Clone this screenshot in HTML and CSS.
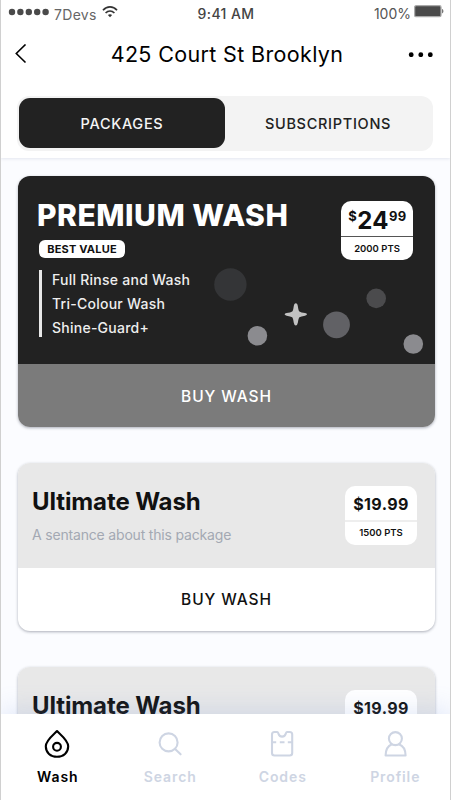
FILE: index.html
```html
<!DOCTYPE html>
<html lang="en">
<head>
  <meta charset="UTF-8">
  <meta name="viewport" content="width=device-width, initial-scale=1.0">
  <title>425 Court St Brooklyn</title>
  <link rel="stylesheet" href="styles.css">
</head>
<body>
  <div class="phone">
    <header class="header">
      <div class="status-bar">
        <div class="carrier">
          <svg width="42" height="8" viewBox="0 0 42 8" fill="#4a4a4a">
            <circle cx="4" cy="4" r="3.2"/><circle cx="12.4" cy="4" r="3.2"/><circle cx="20.8" cy="4" r="3.2"/><circle cx="29.2" cy="4" r="3.2"/><circle cx="37.6" cy="4" r="3.2"/>
          </svg>
          <span class="carrier-name">7Devs</span>
          <svg class="wifi" width="16" height="12" viewBox="0 0 16 12" fill="none" stroke="#333" stroke-width="1.7">
            <path d="M1 4.3C5-.2 11-.2 15 4.3"/>
            <path d="M3.6 7C6.2 4.3 9.8 4.3 12.4 7"/>
            <path d="M8 11.2L5.9 9C7.2 7.9 8.8 7.9 10.1 9Z" fill="#333" stroke="none"/>
          </svg>
        </div>
        <div class="clock">9:41 AM</div>
        <div class="battery">
          <span>100%</span>
          <svg width="30" height="13" viewBox="0 0 30 13">
            <rect x=".6" y=".7" width="26.4" height="11" rx="1.5" fill="#4a4a4a" stroke="#aaa" stroke-width="1.3"/>
            <path d="M28 4C29.9 4.4 29.9 8 28 8.4Z" fill="#777"/>
          </svg>
        </div>
      </div>
      <div class="title-bar">
        <button class="icon-button" aria-label="Back">
          <svg width="12" height="20" viewBox="0 0 12 20" fill="none" stroke="#000" stroke-width="1.6"><path d="M10.5 .5L1.3 9.5L10.5 18.5"/></svg>
        </button>
        <h1>425 Court St Brooklyn</h1>
        <button class="icon-button more" aria-label="More">
          <svg width="26" height="6" viewBox="0 0 26 6"><circle cx="3.2" cy="3.7" r="2.4"/><circle cx="12.8" cy="3.7" r="2.4"/><circle cx="22.3" cy="3.7" r="2.4"/></svg>
        </button>
      </div>
      <div class="tabs">
        <button class="tab active">PACKAGES</button>
        <button class="tab">SUBSCRIPTIONS</button>
      </div>
    </header>

    <main class="content">
      <section class="card premium">
        <div class="card-top">
          <svg class="bubbles" width="417" height="188" viewBox="0 0 417 188">
            <circle cx="212.4" cy="108.5" r="16.2" fill="#343537"/>
            <circle cx="239.4" cy="159.7" r="9.8" fill="#8b8b8f"/>
            <circle cx="318.5" cy="148.8" r="13.4" fill="#616165"/>
            <circle cx="358.2" cy="122.4" r="9.8" fill="#4b4b4d"/>
            <circle cx="395.3" cy="168" r="9.8" fill="#8b8b8f"/>
            <path d="M277.8 127.2Q279.4 127.2 279.9 130.5Q280.5 135 281.4 135.4Q283 136.4 287 136.9Q289 137.3 289 138.3Q289 139.3 287 139.7Q283 140.2 281.4 141.2Q280.5 142 279.9 146.5Q279.4 149.4 277.8 149.4Q276.2 149.4 275.7 146.5Q275.1 142 274.2 141.2Q272.6 140.2 268.6 139.7Q266.6 139.3 266.6 138.3Q266.6 137.3 268.6 136.9Q272.6 136.4 274.2 135.4Q275.1 135 275.7 130.5Q276.2 127.2 277.8 127.2Z" fill="#c2c2c2"/>
          </svg>
          <div class="info">
            <h2>PREMIUM WASH</h2>
            <span class="badge">BEST VALUE</span>
            <ul>
              <li>Full Rinse and Wash</li>
              <li>Tri-Colour Wash</li>
              <li>Shine-Guard+</li>
            </ul>
          </div>
          <div class="price">
            <div class="amount"><sup>$</sup>24<sup>99</sup></div>
            <div class="points">2000 PTS</div>
          </div>
        </div>
        <button class="buy">BUY WASH</button>
      </section>

      <section class="card">
        <div class="card-top">
          <div class="info">
            <h2>Ultimate Wash</h2>
            <p>A sentance about this package</p>
          </div>
          <div class="price">
            <div class="amount">$19.99</div>
            <div class="points">1500 PTS</div>
          </div>
        </div>
        <button class="buy">BUY WASH</button>
      </section>

      <section class="card">
        <div class="card-top">
          <div class="info">
            <h2>Ultimate Wash</h2>
          </div>
          <div class="price">
            <div class="amount">$19.99</div>
          </div>
        </div>
      </section>
    </main>

    <nav class="bottom-nav">
      <a class="nav-item active">
        <svg width="28" height="30" viewBox="0 0 28 30" fill="none" stroke="currentColor" stroke-width="2.1" stroke-linejoin="round">
          <path d="M14 2C11.5 5 2.8 11 2.8 17.3C2.8 23.6 7.6 27.8 14 27.8S25.2 23.6 25.2 17.3C25.2 11 16.5 5 14 2Z"/>
          <circle cx="14" cy="17.8" r="3.9"/>
        </svg>
        <span>Wash</span>
      </a>
      <a class="nav-item">
        <svg width="28" height="30" viewBox="0 0 28 30" fill="none" stroke="currentColor" stroke-width="2.1" stroke-linecap="round">
          <circle cx="12.6" cy="13.4" r="9"/><path d="M19.1 19.9L24.6 25.3"/>
        </svg>
        <span>Search</span>
      </a>
      <a class="nav-item">
        <svg width="28" height="30" viewBox="0 0 28 30" fill="none" stroke="currentColor" stroke-width="2.1" stroke-linejoin="round">
          <path d="M6.5 3H9.2C10.2 3 10 4 10.5 4.8C11.8 8.6 16.4 8.6 17.7 4.8C18.2 4 18 3 19 3H21.7Q24.2 3 24.2 5.5V24Q24.2 26.5 21.7 26.5H6.5Q4 26.5 4 24V5.5Q4 3 6.5 3Z"/>
          <path d="M4 13.3H8.2M11.8 13.3H16.5M19.8 13.3H24.2"/>
        </svg>
        <span>Codes</span>
      </a>
      <a class="nav-item">
        <svg width="28" height="30" viewBox="0 0 28 30" fill="none" stroke="currentColor" stroke-width="2.1" stroke-linejoin="round">
          <circle cx="14.4" cy="9.6" r="6.5"/>
          <path d="M10.9 15.2C6.7 16.8 4.7 20.6 4.6 26.5H24.6C24.5 20.6 22.5 16.8 17.9 15.2"/>
        </svg>
        <span>Profile</span>
      </a>
    </nav>
  </div>
</body>
</html>
```

FILE: styles.css
```css
* {
  box-sizing: border-box;
}

body {
  margin: 0;
  font-family: Inter, "Liberation Sans", sans-serif;
  color: #111;
}

h1, h2, p, ul {
  margin: 0;
  padding: 0;
}

button {
  font-family: inherit;
  border: none;
  background: none;
  padding: 0;
  cursor: pointer;
}

svg {
  display: block;
}

.phone {
  width: 451px;
  height: 800px;
  display: flex;
  flex-direction: column;
  overflow: hidden;
  background: #fbfcff;
  border-left: 1px solid #d0d0d0;
  border-right: 1px solid #d0d0d0;
}

.header {
  flex: none;
  height: 158px;
  background: #fff;
  box-shadow: 0 1px 3px rgba(60, 70, 120, 0.12);
}

.status-bar {
  display: grid;
  grid-template-columns: 1fr auto 1fr;
  height: 27px;
  padding: 0 6px 0 7px;
  align-items: center;
  font-size: 14px;
  color: #444;
}

.carrier {
  display: flex;
  align-items: center;
  margin-top: -3px;
}

.carrier-name {
  margin: 4px 5px 0 4px;
  letter-spacing: 0.3px;
  color: #666;
}

.clock {
  letter-spacing: 0.4px;
  font-weight: 500;
}

.battery {
  display: flex;
  justify-content: flex-end;
  gap: 3px;
  color: #555;
}

.title-bar {
  display: grid;
  grid-template-columns: 1fr auto 1fr;
  align-items: center;
  height: 54px;
  padding: 0 16px 0 14px;
}

.icon-button {
  justify-self: start;
}

.icon-button.more {
  justify-self: end;
}

.title-bar h1 {
  padding: 0 0 1px 5px;
  font-size: 21.5px;
  font-weight: 400;
  letter-spacing: 0.35px;
  color: #000;
}

.tabs {
  display: flex;
  height: 55px;
  margin: 15px 17px 0 16px;
  padding: 2px 2px 3px;
  background: #f3f3f3;
  border-radius: 12px;
}

.tab {
  flex: 1;
  border-radius: 11px;
  font-size: 14.5px;
  font-weight: 500;
  letter-spacing: 0.7px;
  color: #222;
}

.tab.active {
  background: #222;
  color: #f5f5f5;
}

.content {
  flex: 1;
  min-height: 0;
  overflow: hidden;
  padding: 18px 15px 0 17px;
}

.card {
  margin-bottom: 36px;
  border-radius: 12px;
  overflow: hidden;
  background: #fff;
  box-shadow: 0 1px 3px rgba(20, 30, 50, 0.35);
}

.card-top {
  display: flex;
  justify-content: space-between;
  align-items: flex-start;
  height: 105px;
  padding: 23px 18px 0 14px;
  background: #e8e8e8;
}

.card h2 {
  font-size: 24px;
  line-height: 31px;
  font-weight: 700;
  letter-spacing: -0.1px;
}

.card p {
  margin-top: 9px;
  font-size: 14px;
  line-height: 17px;
  letter-spacing: -0.18px;
  color: #a3a8b3;
}

.price {
  width: 72px;
  background: #fff;
  border-radius: 10px;
  text-align: center;
  color: #111;
}

.amount {
  height: 36px;
  font-size: 16px;
  line-height: 37px;
  font-weight: 700;
  letter-spacing: 0.4px;
  border-bottom: 2px solid #eee;
}

.points {
  height: 23px;
  font-size: 9.5px;
  line-height: 22px;
  font-weight: 600;
}

.buy {
  display: block;
  width: 100%;
  height: 62px;
  font-size: 15.5px;
  font-weight: 500;
  letter-spacing: 0.9px;
  color: #111;
}

.card .buy {
  margin-bottom: 1px;
}

.premium .card-top {
  position: relative;
  height: 188px;
  padding: 25px 22px 0 19px;
  background: #222;
}

.premium .info,
.premium .price {
  position: relative;
}

.premium h2 {
  font-size: 30px;
  line-height: 28px;
  font-weight: 800;
  letter-spacing: 0.5px;
  color: #fff;
}

.premium .amount {
  display: flex;
  justify-content: center;
  padding-left: 1px;
  font-size: 24px;
  line-height: 39px;
  border-bottom: 1px solid #555;
}

.premium .amount sup {
  font-size: 13px;
  line-height: 31px;
}

.premium .points {
  line-height: 23px;
}

.premium .buy {
  height: 63px;
  margin-bottom: 0;
  padding-top: 2px;
  background: #7b7b7b;
  color: #fff;
}

.bubbles {
  position: absolute;
  left: 0;
  top: 0;
}

.badge {
  display: block;
  width: 86px;
  height: 18px;
  margin: 11px 0 0 2px;
  border-radius: 6px;
  background: #fff;
  color: #111;
  font-size: 11px;
  line-height: 19px;
  font-weight: 700;
  letter-spacing: 0.2px;
  text-align: center;
}

.premium ul {
  margin: 12px 0 0 2px;
  padding-left: 10px;
  border-left: 3px solid #e8e8e8;
  list-style: none;
  height: 67px;
  font-size: 14px;
  line-height: 24px;
  font-weight: 500;
  letter-spacing: 0.25px;
  color: #eee;
}

.premium li {
  position: relative;
  top: -2px;
}

.bottom-nav {
  position: relative;
  flex: none;
  display: flex;
  height: 86px;
  margin-right: -1px;
  background: #fff;
  box-shadow: 0 -4px 24px rgba(120, 150, 220, 0.2);
}

.nav-item {
  flex: 1;
  display: flex;
  flex-direction: column;
  align-items: center;
  padding-top: 15px;
  color: #ced5e3;
}

.nav-item.active {
  color: #000;
}

.nav-item span {
  margin-top: 9px;
  padding-left: 1px;
  font-size: 14px;
  line-height: 17px;
  font-weight: 600;
  letter-spacing: 0.9px;
}
```
